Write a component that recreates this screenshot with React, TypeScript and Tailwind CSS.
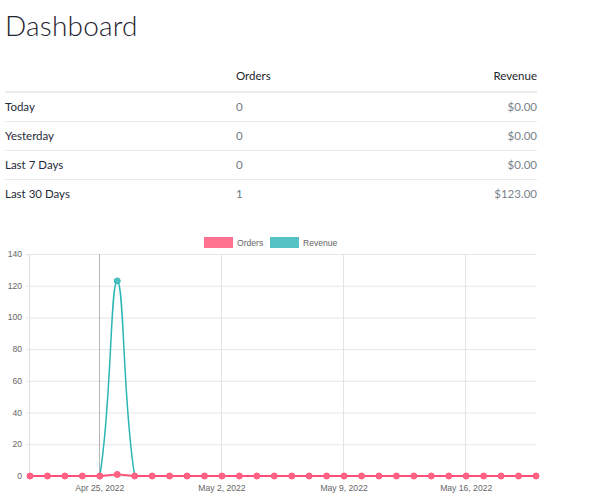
const rows = [
  { label: "Today", orders: "0", revenue: "$0.00" },
  { label: "Yesterday", orders: "0", revenue: "$0.00" },
  { label: "Last 7 Days", orders: "0", revenue: "$0.00" },
  { label: "Last 30 Days", orders: "1", revenue: "$123.00" },
];

// chart geometry, page coords minus svg top
const top = 24;
const bottom = 246;
const left = 30;
const right = 536;
const step = (right - left) / 29;
const yFor = (v: number) => bottom - (v / 140) * (bottom - top);
const xs = Array.from({ length: 30 }, (_, i) => left + i * step);
const orders = xs.map((_, i) => (i === 5 ? 1 : 0));

const yTicks = [140, 120, 100, 80, 60, 40, 20, 0];
const xTicks = [
  { i: 4, label: "Apr 25, 2022" },
  { i: 11, label: "May 2, 2022" },
  { i: 18, label: "May 9, 2022" },
  { i: 25, label: "May 16, 2022" },
];

const Chart = () => {
  const p0 = xs[4];
  const p1 = xs[5];
  const p2 = xs[6];
  const peak = yFor(123);
  const revPath = `M${left},${bottom} L${p0},${bottom} C${p0 + 12},${bottom - 72} ${p1 - 7},${peak} ${p1},${peak} C${p1 + 7},${peak} ${p2 - 12},${bottom - 72} ${p2},${bottom} L${right},${bottom}`;
  const ordPath = xs.map((x, i) => `${i ? "L" : "M"}${x},${yFor(orders[i])}`).join(" ");

  return (
    <svg width="545" height="270" className="block" style={{ fontFamily: '"Liberation Sans", Arial, sans-serif' }}>
      {/* legend */}
      <rect x="204.5" y="7.5" width="28" height="10" fill="#ff6384" stroke="#ff6384" opacity="0.9" />
      <text x="237" y="15.5" fontSize="8.6" fill="#666">Orders</text>
      <rect x="270.5" y="7.5" width="28" height="10" fill="#4bc0c0" stroke="#4bc0c0" opacity="0.95" />
      <text x="303" y="15.5" fontSize="8.6" fill="#666">Revenue</text>

      {/* horizontal grid */}
      {yTicks.map((t) => (
        <g key={t}>
          <line x1={left - 4} x2={right} y1={yFor(t) + 0.5} y2={yFor(t) + 0.5} stroke="#e6e6e6" />
          <text x="22" y={yFor(t) + 3} fontSize="8.6" fill="#666" textAnchor="end">{t}</text>
        </g>
      ))}

      {/* vertical grid */}
      <line x1={left - 0.5} x2={left - 0.5} y1={top} y2={bottom + 4} stroke="#e0e0e0" />
      {xTicks.map((t) => (
        <g key={t.label}>
          <line
            x1={Math.round(xs[t.i]) - 0.5}
            x2={Math.round(xs[t.i]) - 0.5}
            y1={top}
            y2={bottom + 4}
            stroke={t.i === 4 ? "#b5b5b5" : "#e3e3e3"}
          />
          <text x={xs[t.i]} y="261" fontSize="8.6" fill="#666" textAnchor="middle">{t.label}</text>
        </g>
      ))}

      {/* revenue */}
      <path d={revPath} fill="none" stroke="#2cb5b5" strokeWidth="1.5" />
      <circle cx={p1} cy={peak} r="3" fill="#4bc0c0" stroke="#3bb8b8" />

      {/* orders */}
      <path d={ordPath} fill="none" stroke="#ff4f78" strokeWidth="1.8" />
      {xs.map((x, i) => (
        <circle key={i} cx={x} cy={yFor(orders[i])} r="3" fill="#ff6384" stroke="#ff5a7d" />
      ))}
    </svg>
  );
};

export default function App() {
  return (
    <div className="bg-white min-h-[500px] w-[603px] overflow-hidden" style={{ fontFamily: "Lato, 'Open Sans', sans-serif" }}>
      <h1 className="pl-[5px] pt-[6px] text-[28px] leading-[38px] font-light text-[#1f2330] tracking-[0.2px]">
        Dashboard
      </h1>

      <table className="ml-[5px] mt-[19px] w-[532px] text-[11.5px] border-collapse">
        <thead>
          <tr className="border-b-2 border-[#e9ecef]">
            <th className="w-[231px] h-[29px] text-left font-normal"></th>
            <th className="text-left font-normal text-[#212529] pb-[2px]">Orders</th>
            <th className="text-right font-normal text-[#212529] pb-[2px]">Revenue</th>
          </tr>
        </thead>
        <tbody>
          {rows.map((r, i) => (
            <tr key={r.label} className={i < rows.length - 1 ? "border-b border-[#e9ecef]" : ""}>
              <td className="h-[29px] text-[#1f2a3a]">{r.label}</td>
              <td className="text-[#6c7a86]">{r.orders}</td>
              <td className="text-right text-[#7a828a]">{r.revenue}</td>
            </tr>
          ))}
        </tbody>
      </table>

      <div className="mt-[22px]">
        <Chart />
      </div>
    </div>
  );
}
